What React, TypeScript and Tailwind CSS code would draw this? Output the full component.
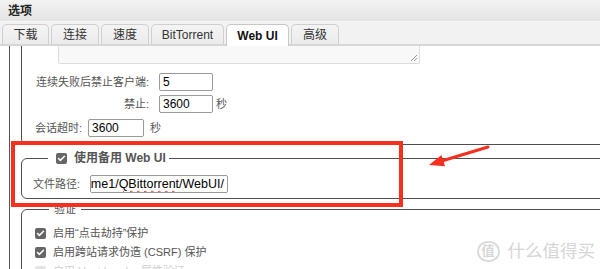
import { Check } from 'lucide-react'

const tabs = [
  { label: '下载', w: 'w-[47px]' },
  { label: '连接', w: 'w-[48px]' },
  { label: '速度', w: 'w-[48px]' },
  { label: 'BitTorrent', w: 'w-[73px]' },
  { label: 'Web UI', w: 'w-[63px]', active: true },
  { label: '高级', w: 'w-[48px]' },
]

function Box({ faded }: { faded?: boolean }) {
  return (
    <span
      className={`flex w-[11px] h-[11px] shrink-0 items-center justify-center rounded-[2px] ${
        faded ? 'bg-[#e4e4e4]' : 'bg-[#666]'
      }`}
    >
      {!faded && <Check className="w-[9px] h-[9px] text-white" strokeWidth={4} />}
    </span>
  )
}

function Field({ value, w }: { value: string; w: string }) {
  return (
    <div className={`${w} h-[18px] border border-[#9a9a9a] rounded-[2px] bg-white px-[3px] text-[12px] leading-[16px] text-black`}>
      {value}
    </div>
  )
}

export default function App() {
  return (
    <div className="relative w-[600px] h-[269px] overflow-hidden bg-white font-['Liberation_Sans','Noto_Sans_CJK_SC',sans-serif]">
      {/* title */}
      <div className="h-[22px] bg-gradient-to-b from-[#f3f3f3] to-[#e4e4e4] border-b border-[#f7f7f7] pl-[8px] text-[12px] leading-[22px] font-bold text-[#222]">
        选项
      </div>

      {/* tabs */}
      <div className="h-[24px] bg-[#f2f2f2] border-b-2 border-[#d6d6d6] flex items-end gap-[2px] pl-[2px]">
        {tabs.map((t) => (
          <div
            key={t.label}
            className={`${t.w} h-[20px] flex items-center justify-center rounded-t-[5px] border border-b-0 text-[12px] ${
              t.active
                ? 'bg-white border-[#c8c8c8] font-bold text-[#111] -mb-[2px] h-[22px]'
                : 'bg-gradient-to-b from-[#f4f4f4] to-[#ebebeb] border-[#cfcfcf] text-[#333]'
            }`}
          >
            {t.label}
          </div>
        ))}
      </div>

      {/* content */}
      <div className="h-[223px] overflow-hidden">
        <div className="w-[700px] ml-[9px] h-full border-l border-[#555] text-[11px] text-[#555]">
          {/* ban settings */}
          <div className="ml-[11px] border-l border-b border-[#4f4f4f] rounded-bl-[6px] pl-[13px] pb-[7px]">
            <div className="relative ml-[23px] w-[362px] h-[18px] bg-[#f8f8f8] border border-t-0 border-[#dcdcdc] rounded-b-[2px]">
              <svg className="absolute right-[1px] bottom-[1px]" width="8" height="8" viewBox="0 0 8 8">
                <path d="M1 7 L7 1 M4 7 L7 4" stroke="#999" strokeWidth="1" />
              </svg>
            </div>
            <div className="mt-[9px] flex items-center h-[18px]">
              <span className="w-[114px] mr-[10px] text-right whitespace-nowrap">连续失败后禁止客户端:</span>
              <Field value="5" w="w-[54px]" />
            </div>
            <div className="mt-[4px] flex items-center h-[18px]">
              <span className="w-[114px] mr-[10px] text-right whitespace-nowrap">禁止:</span>
              <Field value="3600" w="w-[54px]" />
              <span className="ml-[3px]">秒</span>
            </div>
            <div className="mt-[6px] flex items-center h-[18px]">
              <span className="whitespace-nowrap">会话超时:</span>
              <div className="ml-[6px]">
                <Field value="3600" w="w-[56px]" />
              </div>
              <span className="ml-[6px]">秒</span>
            </div>
          </div>

          {/* alternative web ui */}
          <fieldset className="ml-[11px] mt-[6px] border border-[#4f4f4f] rounded-[6px] pl-[11px] pb-[5px]">
            <legend className="ml-[15px] pl-[8px] pr-[3px] leading-[14px]">
              <span className="flex items-center gap-[7px]">
                <Box />
                <span className="text-[12px] font-bold text-[#555]">使用备用 Web UI</span>
              </span>
            </legend>
            <div className="pt-[10px] flex items-center h-[28px]">
              <span className="w-[54px] mr-[3px] whitespace-nowrap">文件路径:</span>
              <div className="w-[138px] h-[18px] border border-[#9a9a9a] rounded-[2px] overflow-hidden flex justify-end items-center px-[3px] whitespace-nowrap text-[12.5px] text-black">
                <span>
                  /volume1/
                  <span className="underline decoration-wavy decoration-[#e53935] decoration-1 underline-offset-2">
                    QBittorrent
                  </span>
                  /WebUI/
                </span>
              </div>
            </div>
          </fieldset>

          {/* auth */}
          <fieldset className="ml-[11px] mt-[3px] border border-[#4f4f4f] rounded-[6px] pl-[13px]">
            <legend className="ml-[14px] px-[5px] leading-[14px] text-[11px] text-[#555]">验证</legend>
            <div className="pt-[8px]">
              <div className="h-[19px] flex items-center gap-[7px]">
                <Box />
                <span>启用“点击劫持”保护</span>
              </div>
              <div className="h-[19px] flex items-center gap-[7px]">
                <Box />
                <span>启用跨站请求伪造 (CSRF) 保护</span>
              </div>
              <div className="h-[19px] flex items-center gap-[7px] text-[#cfcfcf]">
                <Box faded />
                <span>启用 Host header 属性验证</span>
              </div>
            </div>
          </fieldset>
        </div>
      </div>

      {/* annotation box */}
      <div className="absolute left-[11px] top-[141px] w-[392px] h-[66px] border-[4px] border-[#f5301e]" />

      {/* annotation arrow */}
      <svg className="absolute left-[420px] top-[140px]" width="80" height="35" viewBox="0 0 80 35">
        <line x1="68" y1="7" x2="20" y2="21.5" stroke="#f5301e" strokeWidth="3" strokeLinecap="round" />
        <polygon points="9,25 21.5,14.9 25,26.3" fill="#f5301e" />
      </svg>

      {/* watermark */}
      <div className="absolute right-[5px] bottom-[7px] flex items-center gap-[8px] text-[#d6d6d6]">
        <span className="flex w-[23px] h-[21px] items-center justify-center rounded-full border-2 border-[#dadada] text-[13px] font-bold">
          值
        </span>
        <span className="text-[17.5px] leading-[22px] tracking-[0px]">什么值得买</span>
      </div>
    </div>
  )
}
